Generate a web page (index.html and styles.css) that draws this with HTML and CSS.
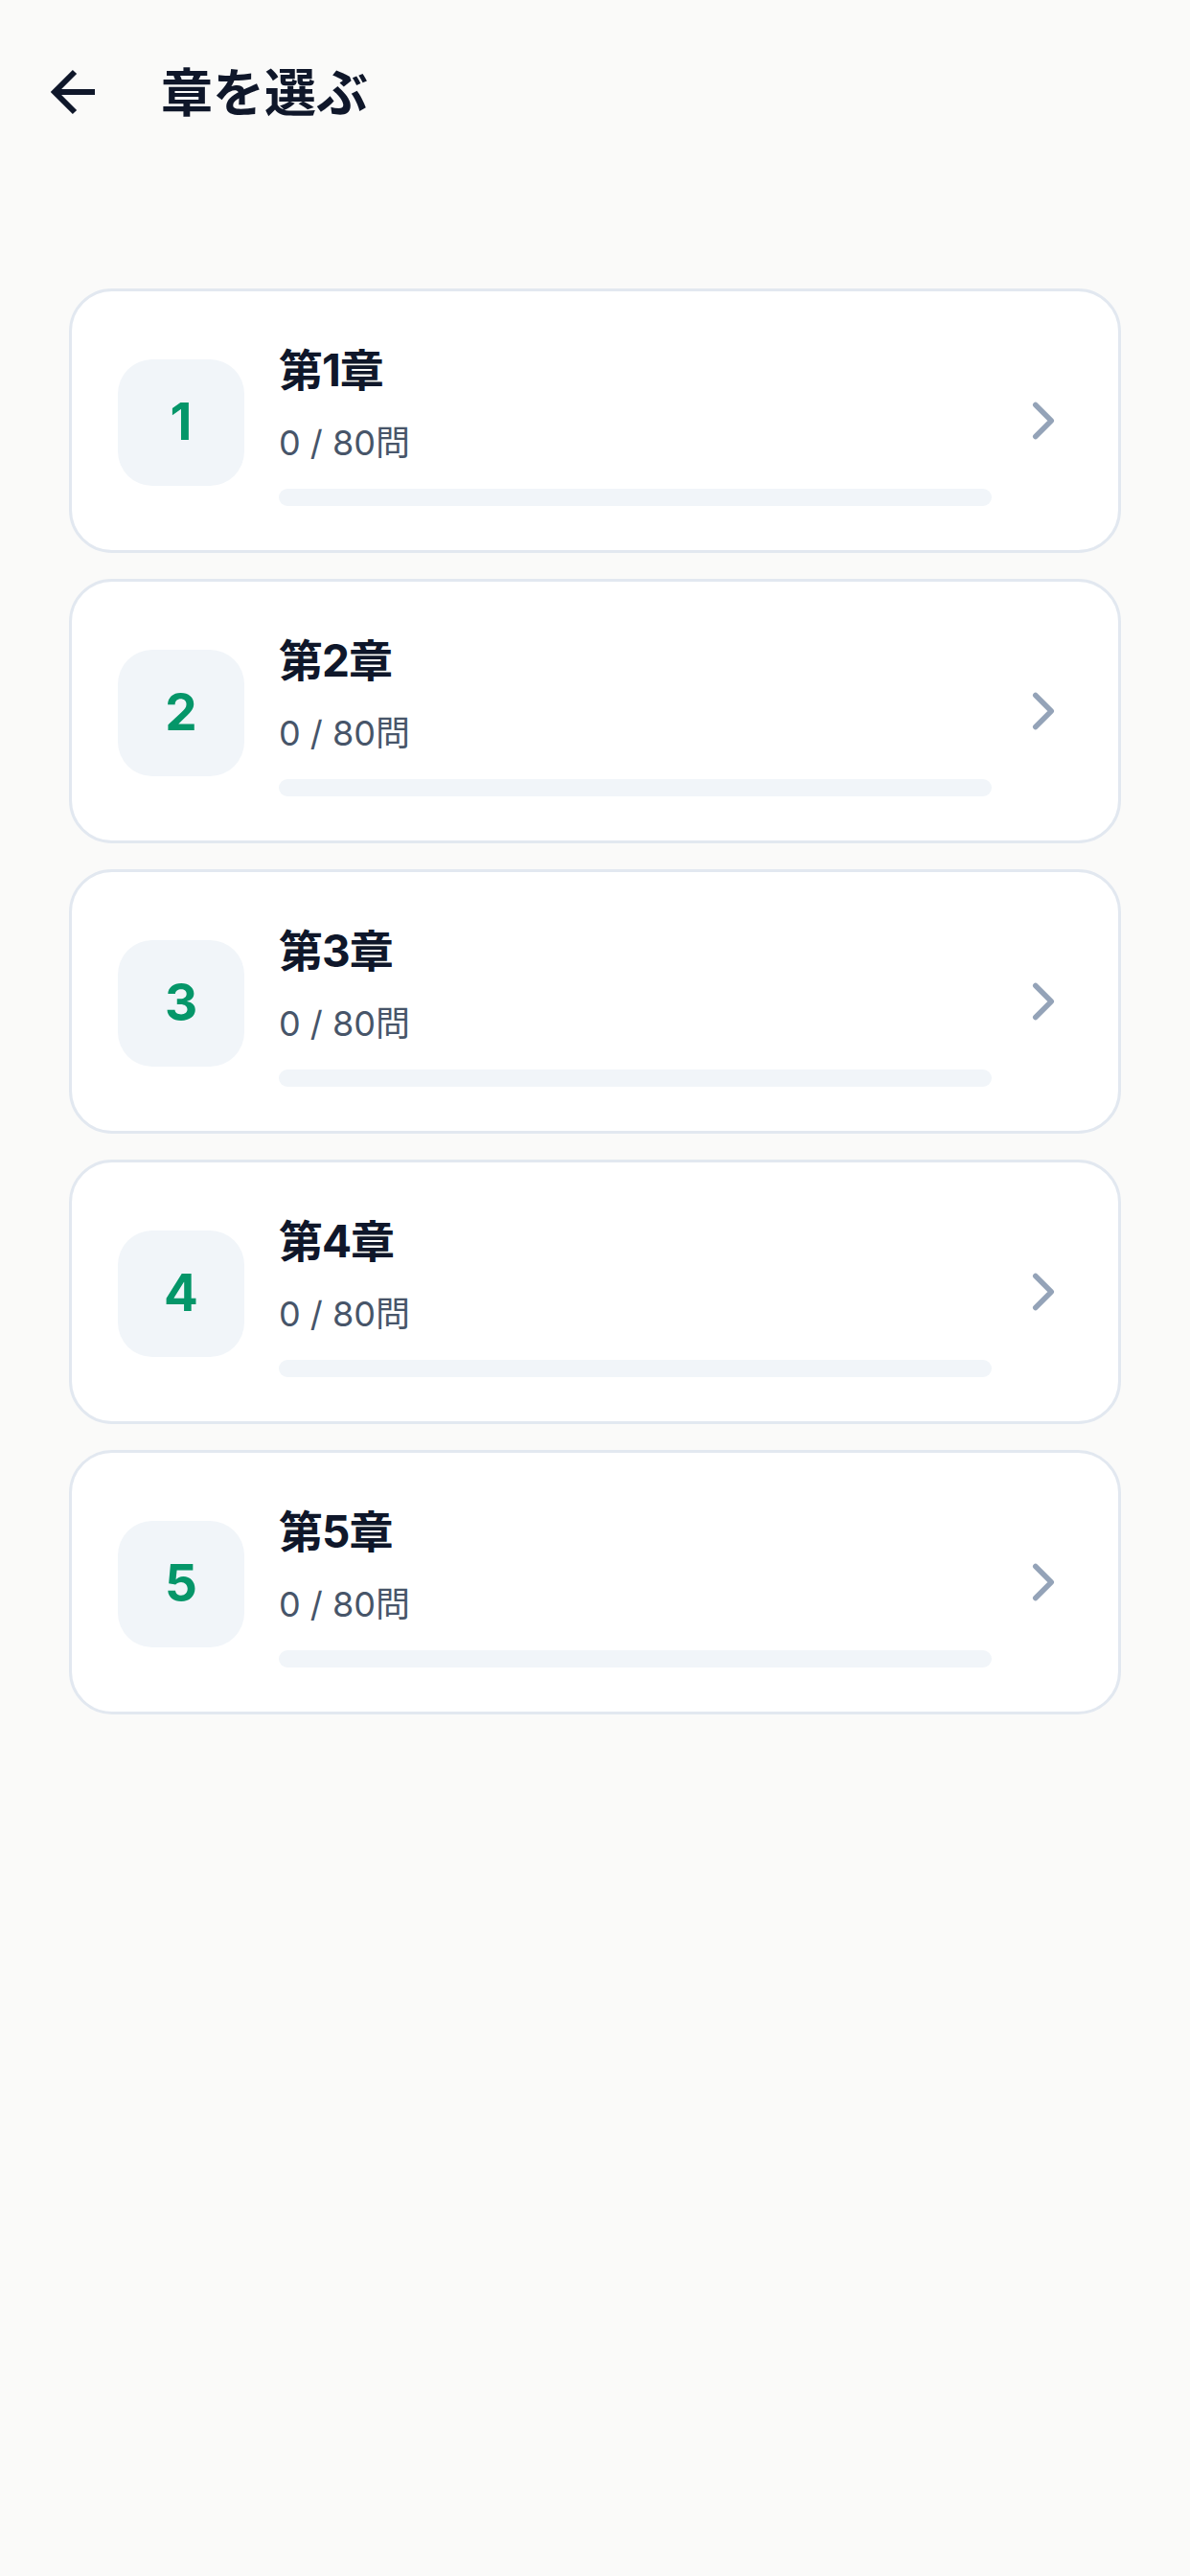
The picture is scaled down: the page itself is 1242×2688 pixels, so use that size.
FILE: index.html
```html
<!DOCTYPE html>
<html lang="ja">
<head>
<meta charset="utf-8">
<title>章を選ぶ</title>
<link rel="stylesheet" href="styles.css">
</head>
<body>
<header class="topbar">
  <svg class="back" viewBox="0 0 24 24" fill="none" stroke="currentColor" stroke-width="2" stroke-linecap="butt" stroke-linejoin="miter"><path d="m12 19-7-7 7-7"/><path d="M19 12H5"/></svg>
  <h1 class="page-title">章を選ぶ</h1>
</header>
<main class="list">
  <div class="card">
    <div class="badge">1</div>
    <div class="info">
      <div class="name">第1章</div>
      <div class="count">0 / 80問</div>
      <div class="bar"></div>
    </div>
    <svg class="chev" viewBox="0 0 24 24" fill="none" stroke="currentColor" stroke-width="2" stroke-linecap="round" stroke-linejoin="round"><path d="m9 18 6-6-6-6"/></svg>
  </div>
  <div class="card">
    <div class="badge">2</div>
    <div class="info">
      <div class="name">第2章</div>
      <div class="count">0 / 80問</div>
      <div class="bar"></div>
    </div>
    <svg class="chev" viewBox="0 0 24 24" fill="none" stroke="currentColor" stroke-width="2" stroke-linecap="round" stroke-linejoin="round"><path d="m9 18 6-6-6-6"/></svg>
  </div>
  <div class="card">
    <div class="badge">3</div>
    <div class="info">
      <div class="name">第3章</div>
      <div class="count">0 / 80問</div>
      <div class="bar"></div>
    </div>
    <svg class="chev" viewBox="0 0 24 24" fill="none" stroke="currentColor" stroke-width="2" stroke-linecap="round" stroke-linejoin="round"><path d="m9 18 6-6-6-6"/></svg>
  </div>
  <div class="card">
    <div class="badge">4</div>
    <div class="info">
      <div class="name">第4章</div>
      <div class="count">0 / 80問</div>
      <div class="bar"></div>
    </div>
    <svg class="chev" viewBox="0 0 24 24" fill="none" stroke="currentColor" stroke-width="2" stroke-linecap="round" stroke-linejoin="round"><path d="m9 18 6-6-6-6"/></svg>
  </div>
  <div class="card">
    <div class="badge">5</div>
    <div class="info">
      <div class="name">第5章</div>
      <div class="count">0 / 80問</div>
      <div class="bar"></div>
    </div>
    <svg class="chev" viewBox="0 0 24 24" fill="none" stroke="currentColor" stroke-width="2" stroke-linecap="round" stroke-linejoin="round"><path d="m9 18 6-6-6-6"/></svg>
  </div>
</main>
</body>
</html>
```

FILE: styles.css
```css
* { box-sizing: border-box; }
html, body {
  margin: 0;
  padding: 0;
  background: #fafaf9;
}
body {
  font-family: Inter, "Noto Sans CJK JP", sans-serif;
  color: #0f172a;
  min-height: 2688px;
}
.topbar {
  display: flex;
  align-items: center;
  height: 72px;
  margin-top: 60px;
  padding-left: 42px;
}
.back {
  width: 72px;
  height: 72px;
  color: #0f172a;
  flex: none;
}
.page-title {
  margin: 4px 0 0 54px;
  font-size: 54px;
  line-height: 72px;
  font-weight: 700;
  color: #0f172a;
}
.list {
  margin-top: 169px;
  padding: 0 72px;
  display: flex;
  flex-direction: column;
  gap: 27px;
}
.card {
  display: flex;
  align-items: center;
  background: #ffffff;
  border: 3px solid #e2e8f0;
  border-radius: 45px;
  padding: 0 45px 0 48px;
}
.badge {
  flex: none;
  width: 132px;
  height: 132px;
  margin-top: 3px;
  border-radius: 36px;
  background: #f1f5f9;
  color: #059669;
  font-size: 53px;
  line-height: 1;
  font-weight: 700;
  display: flex;
  align-items: center;
  justify-content: center;
}
.info {
  flex: 1;
  margin-left: 36px;
  padding: 52px 0 46px;
  display: flex;
  flex-direction: column;
}
.name {
  font-size: 46px;
  line-height: 60px;
  font-weight: 700;
  letter-spacing: -1px;
  color: #0f172a;
}
.count {
  margin-top: 22px;
  font-size: 36px;
  line-height: 48px;
  color: #475569;
}
.bar {
  margin-top: 24px;
  height: 18px;
  border-radius: 9px;
  background: #f1f5f9;
}
.chev {
  flex: none;
  width: 66px;
  height: 66px;
  margin-left: 21px;
  color: #94a3b8;
}
```
